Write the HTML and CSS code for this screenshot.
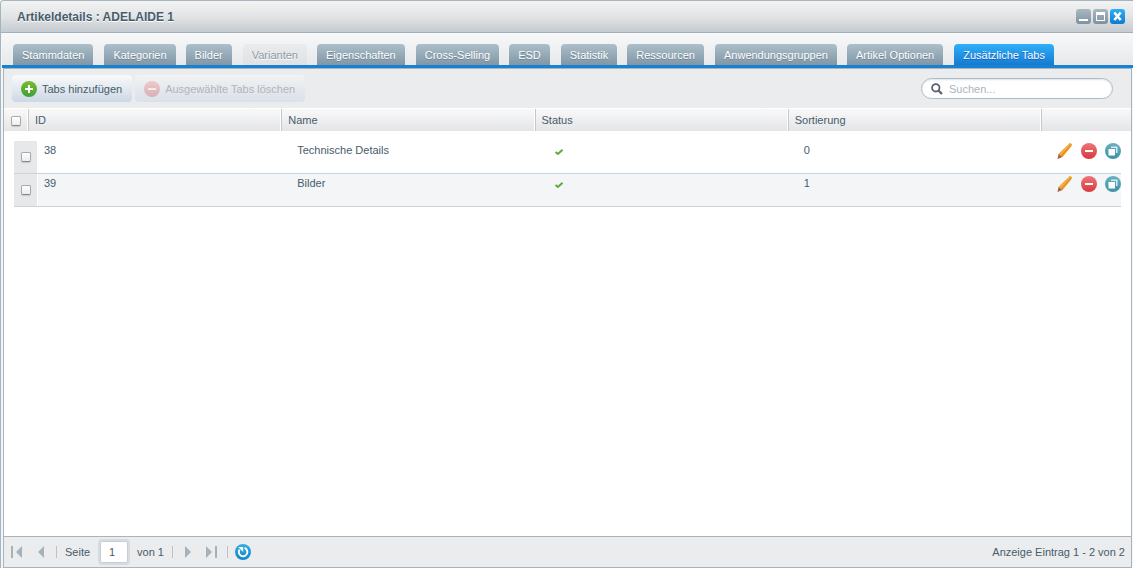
FILE: index.html
```html
<!DOCTYPE html>
<html lang="de">
<head>
<meta charset="utf-8">
<title>Artikeldetails : ADELAIDE 1</title>
<link rel="stylesheet" href="styles.css">
</head>
<body>
<svg class="defs" width="0" height="0" aria-hidden="true">
  <defs>
    <linearGradient id="green" x1="0" y1="0" x2="0" y2="1"><stop offset="0" stop-color="#79bd2f"/><stop offset="1" stop-color="#3f9f35"/></linearGradient>
    <linearGradient id="red" x1="0" y1="0" x2="0" y2="1"><stop offset="0" stop-color="#ee767a"/><stop offset="1" stop-color="#d6393d"/></linearGradient>
    <linearGradient id="teal" x1="0" y1="0" x2="0" y2="1"><stop offset="0" stop-color="#6bb1c0"/><stop offset="1" stop-color="#3c90a6"/></linearGradient>
    <linearGradient id="blue" x1="0" y1="0" x2="0" y2="1"><stop offset="0" stop-color="#33aee2"/><stop offset="1" stop-color="#1285c8"/></linearGradient>
    <symbol id="minus" viewBox="0 0 16 16"><circle cx="8" cy="8" r="8" fill="url(#red)"/><rect x="4" y="7" width="8" height="2" fill="#fff"/></symbol>
    <symbol id="plus" viewBox="0 0 16 16"><circle cx="8" cy="8" r="8" fill="url(#green)"/><path d="M4 7h3V4h2v3h3v2H9v3H7V9H4z" fill="#fff"/></symbol>
    <symbol id="copy" viewBox="0 0 16 16"><circle cx="8" cy="8" r="8" fill="url(#teal)"/><path d="M6 3.500h6.500V10H11V5H6z" fill="#d8ebef"/><rect x="3.500" y="6" width="6.500" height="6.500" fill="#fff"/></symbol>
    <symbol id="pencil" viewBox="0 0 16 16"><path d="M11.500 1.500L13 0l2 1.300-.6 2L5.500 14 1.500 11z" fill="#e99526"/><path d="M11.500 1.500L13 0l1 .7L3.500 12.500l-2-1.500z" fill="#f4ae42"/><path d="M1.500 11l4 3L.5 16z" fill="#a5624a"/></symbol>
    <symbol id="check" viewBox="0 0 8 6"><path d="M.6 2.900L2.900 5 7.500.8" fill="none" stroke="#5cad38" stroke-width="1.900"/></symbol>
  </defs>
</svg>
<main class="window">
  <header class="titlebar">
    <h1 class="title">Artikeldetails : ADELAIDE 1</h1>
    <div class="tools">
      <button class="tool" type="button" aria-label="Minimieren"><svg width="15" height="15"><rect x="3" y="10" width="9" height="2" fill="#fff"/></svg></button>
      <button class="tool" type="button" aria-label="Maximieren"><svg width="15" height="15"><path d="M3 3h9v9H3zM4 6v5h7V6z" fill="#fff" fill-rule="evenodd"/></svg></button>
      <button class="tool tool-close" type="button" aria-label="Schließen"><svg width="15" height="15"><path d="M4.300 3.500l6.400 7.500M10.700 3.500L4.300 11" stroke="#fff" stroke-width="2.600"/></svg></button>
    </div>
  </header>
  <nav class="tabs" role="tablist">
    <button class="tab" type="button" role="tab">Stammdaten</button>
    <button class="tab" type="button" role="tab">Kategorien</button>
    <button class="tab" type="button" role="tab">Bilder</button>
    <button class="tab" type="button" role="tab" disabled>Varianten</button>
    <button class="tab" type="button" role="tab">Eigenschaften</button>
    <button class="tab" type="button" role="tab">Cross-Selling</button>
    <button class="tab" type="button" role="tab">ESD</button>
    <button class="tab" type="button" role="tab">Statistik</button>
    <button class="tab" type="button" role="tab">Ressourcen</button>
    <button class="tab" type="button" role="tab">Anwendungsgruppen</button>
    <button class="tab" type="button" role="tab">Artikel Optionen</button>
    <button class="tab active" type="button" role="tab" aria-selected="true">Zusätzliche Tabs</button>
  </nav>
  <section class="panel">
    <div class="toolbar">
      <button class="action" type="button"><svg width="16" height="16"><use href="#plus"/></svg>Tabs hinzufügen</button>
      <button class="action" type="button" disabled><svg width="16" height="16"><use href="#minus"/></svg>Ausgewählte Tabs löschen</button>
      <label class="search">
        <svg width="12" height="12" viewBox="0 0 12 12" aria-hidden="true"><circle cx="4.800" cy="4.800" r="3.700" fill="none" stroke="#55616d" stroke-width="1.800"/><path d="M7.500 7.500l3.500 3.500" stroke="#55616d" stroke-width="2.200"/></svg>
        <input type="search" placeholder="Suchen..." aria-label="Suchen">
      </label>
    </div>
    <table class="grid">
      <thead>
        <tr>
          <th><input type="checkbox" aria-label="Alle auswählen"></th>
          <th>ID</th>
          <th>Name</th>
          <th>Status</th>
          <th>Sortierung</th>
          <th></th>
        </tr>
      </thead>
      <tbody>
        <tr>
          <td class="pick"><input type="checkbox" aria-label="38 auswählen"></td>
          <td>38</td>
          <td>Technische Details</td>
          <td class="status"><svg width="8" height="6" role="img" aria-label="aktiv"><use href="#check"/></svg></td>
          <td>0</td>
          <td class="icons">
            <button type="button" aria-label="Bearbeiten"><svg width="16" height="16"><use href="#pencil"/></svg></button>
            <button type="button" aria-label="Löschen"><svg width="16" height="16"><use href="#minus"/></svg></button>
            <button type="button" aria-label="Duplizieren"><svg width="16" height="16"><use href="#copy"/></svg></button>
          </td>
        </tr>
        <tr>
          <td class="pick"><input type="checkbox" aria-label="39 auswählen"></td>
          <td>39</td>
          <td>Bilder</td>
          <td class="status"><svg width="8" height="6" role="img" aria-label="aktiv"><use href="#check"/></svg></td>
          <td>1</td>
          <td class="icons">
            <button type="button" aria-label="Bearbeiten"><svg width="16" height="16"><use href="#pencil"/></svg></button>
            <button type="button" aria-label="Löschen"><svg width="16" height="16"><use href="#minus"/></svg></button>
            <button type="button" aria-label="Duplizieren"><svg width="16" height="16"><use href="#copy"/></svg></button>
          </td>
        </tr>
      </tbody>
    </table>
    <footer class="pager">
      <div class="nav">
        <button type="button" aria-label="Erste Seite"><svg width="11" height="12"><path d="M0 0h2v12H0zM11 0v12L5 6z" fill="#a5b1bb"/></svg></button>
        <button type="button" aria-label="Vorherige Seite"><svg width="6" height="12"><path d="M6 0v12L0 6z" fill="#a5b1bb"/></svg></button>
      </div>
      <label class="page">Seite <input type="text" value="1"></label>
      <span class="total">von 1</span>
      <div class="nav nav-next">
        <button type="button" aria-label="Nächste Seite"><svg width="6" height="12"><path d="M0 0v12l6-6z" fill="#a5b1bb"/></svg></button>
        <button type="button" aria-label="Letzte Seite"><svg width="11" height="12"><path d="M9 0h2v12H9zM0 0v12l6-6z" fill="#a5b1bb"/></svg></button>
      </div>
      <button class="reload" type="button" aria-label="Neu laden"><svg width="16" height="16" viewBox="0 0 16 16"><circle cx="8" cy="8" r="8" fill="url(#blue)"/><path d="M9.500 3.900A4.300 4.300 0 1 1 4.600 5.500" fill="none" stroke="#fff" stroke-width="1.900"/><path d="M3.200 3h5v5z" fill="#fff"/></svg></button>
      <span class="summary">Anzeige Eintrag 1 - 2 von 2</span>
    </footer>
  </section>
</main>
</body>
</html>
```

FILE: styles.css
```css
* {
  box-sizing: border-box;
}

body {
  margin: 0;
  background: #fff;
  color: #475c6a;
  font: 11px/14px "Liberation Sans", Arial, sans-serif;
}

button,
input {
  margin: 0;
  padding: 0;
  border: 0;
  background: none;
  color: inherit;
  font: inherit;
}

svg {
  display: block;
  flex: none;
}

.defs {
  position: absolute;
}

.window {
  display: flex;
  flex-direction: column;
  min-height: 100vh;
  border-top: 1px solid #a4b5c0;
  border-left: 1px solid #a4b5c0;
  border-top-left-radius: 4px;
  background: #f4f5f6;
}

.titlebar {
  display: flex;
  align-items: center;
  justify-content: space-between;
  height: 32px;
  padding: 0 8px 0 16px;
  border-bottom: 1px solid #9fb0bc;
  border-top-left-radius: 4px;
  background: linear-gradient(#f3f3f3, #e2e4e5 50%, #c5cbd1);
}

.title {
  margin: 0;
  font-size: 12px;
  text-shadow: 0 1px 0 #fff;
}

.tools {
  display: flex;
  gap: 2px;
}

.tool {
  width: 15px;
  height: 15px;
  border-radius: 3px;
  background: linear-gradient(#a9b9c3, #7d929f);
}

.tool-close {
  background: linear-gradient(#2cb0f8, #0f7bd0);
}

.tabs {
  display: flex;
  align-items: flex-end;
  gap: 10px;
  height: 35px;
  margin-left: 1px;
  padding-left: 11px;
  border-bottom: 3px solid #1a80d0;
  background: linear-gradient(#f8f8f9, #e6e8ea);
}

.tab {
  height: 21px;
  padding: 1px 9px 0;
  border-radius: 4px 4px 0 0;
  background: linear-gradient(#acbfca, #8097a6);
  color: #fff;
  text-shadow: 0 1px 0 #6f8493;
  white-space: nowrap;
}

.tab:nth-child(even) {
  margin-left: 1px;
}

.tab:disabled {
  background: linear-gradient(#e9ebec, #dfe1e3);
  color: #8b9ba7;
  text-shadow: 0 1px 0 #fff;
}

.tab.active {
  background: linear-gradient(#2fb0f8, #147bd2);
  text-shadow: 0 1px 0 #1b5fc0;
}

.panel {
  display: flex;
  flex: 1;
  flex-direction: column;
  margin: 0 1px 0 2px;
  border: 1px solid #a4b5c0;
  background: #fff;
}

.toolbar {
  display: flex;
  align-items: center;
  gap: 3px;
  height: 39px;
  padding: 0 18px 0 8px;
  background: #ebecee;
}

.action {
  display: flex;
  align-items: center;
  gap: 5px;
  height: 27px;
  padding: 0 10px 0 9px;
  border-radius: 4px;
  background: linear-gradient(#f9fafb, #e3e9f0 50%, #cbd8e4);
}

.action:disabled {
  background: linear-gradient(#f1f2f3, #dbe1e9);
  color: #b0b4b9;
}

.action:disabled svg {
  opacity: 0.3;
}

.search {
  display: flex;
  align-items: center;
  gap: 6px;
  width: 192px;
  height: 21px;
  margin-left: auto;
  padding: 0 9px;
  border: 1px solid #adbcc7;
  border-radius: 11px;
  background: #fff;
  box-shadow: inset 0 1px 2px #dde3e8;
}

.search input {
  flex: 1;
  min-width: 0;
  outline: 0;
}

.search input::placeholder {
  color: #a9b5be;
  opacity: 1;
}

.grid,
.grid thead,
.grid tbody {
  display: block;
}

.grid {
  flex: 1;
}

.grid tr {
  display: grid;
  grid-template-columns: 24px repeat(4, 1fr) 90px;
}

.grid thead tr {
  height: 23px;
  border-top: 1px solid #fff;
  background: linear-gradient(#f9f9f9, #e4e5e7);
}

.grid th {
  padding: 4px 6px;
  border-left: 1px solid #c3c8cc;
  box-shadow: -1px 0 0 #fff;
  font-weight: normal;
  text-align: left;
}

.grid th:first-child {
  padding: 7px 7px 5px;
  border-left: 0;
  box-shadow: none;
}

.grid input {
  display: block;
  width: 10px;
  height: 10px;
  border: 1px solid #aaa;
  border-bottom-color: #888;
  border-radius: 2px;
  background: linear-gradient(#fff, #ececec);
  box-shadow: 0 1px 1px #c8c8c8;
  appearance: none;
}

.grid input:checked {
  background: #1a80d0;
}

.grid tbody {
  padding: 10px 10px 0;
}

.grid tbody tr {
  grid-template-columns: 24px repeat(4, 1fr) 70px;
  height: 33px;
  border-bottom: 1px solid #cad4dc;
}

.grid tbody tr:nth-child(even) {
  background: #f3f5f7;
}

.grid td {
  padding: 2px 6px;
}

.grid .pick {
  padding: 11px 7px;
  border-right: 1px solid #fff;
  background: #e7e8ea;
}

.grid .status {
  padding: 8px 10px;
}

.grid .icons {
  display: flex;
  gap: 8px;
  justify-content: flex-end;
  padding: 2px 0;
}

.icons button {
  height: 16px;
}

.pager {
  display: flex;
  align-items: center;
  height: 31px;
  padding: 0 6px 0 7px;
  border-top: 1px solid #a4b5c0;
  background: #ebecee;
}

.nav {
  display: flex;
  gap: 16px;
  padding-right: 12px;
  border-right: 1px solid #bcc4ca;
}

.nav-next {
  gap: 15px;
  margin-left: 8px;
  padding: 0 10px 0 12px;
  border-left: 1px solid #bcc4ca;
}

.page {
  display: flex;
  align-items: center;
  gap: 10px;
  padding-left: 8px;
}

.page input {
  width: 28px;
  height: 22px;
  padding-left: 8px;
  border: 1px solid #c5ced6;
  border-radius: 2px;
  outline: 2px solid #d6dce2;
  background: #fff;
}

.total {
  margin-left: 9px;
}

.reload {
  margin-left: 7px;
}

.summary {
  margin-left: auto;
}
```
